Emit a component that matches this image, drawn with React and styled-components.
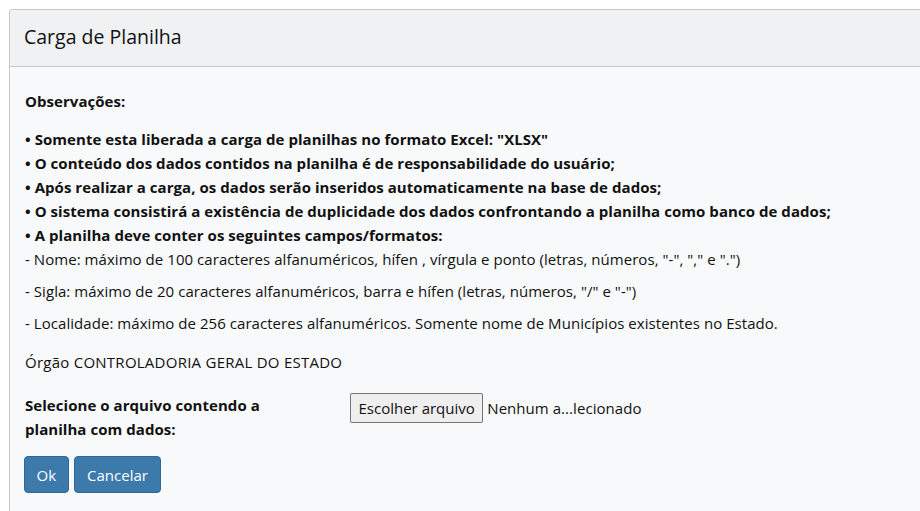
import React from 'react';
import styled, { createGlobalStyle } from 'styled-components';

const GlobalStyle = createGlobalStyle`
  html, body {
    margin: 0;
    padding: 0;
    background: #ffffff;
  }
  body {
    font-family: 'Open Sans', 'Noto Sans', sans-serif;
    font-size: 15px;
    letter-spacing: 0.05px;
    color: #111;
  }
`;

const Page = styled.div`
  padding: 9px 0 0 9px;
  width: 920px;
  height: 511px;
  box-sizing: border-box;
  overflow: hidden;
`;

const Panel = styled.div`
  border: 1px solid #c9c9c9;
  border-right: none;
  border-bottom: none;
  border-top-left-radius: 4px;
  background: #f8f9fa;
  min-height: 600px;
`;

const Header = styled.div`
  height: 56px;
  display: flex;
  align-items: center;
  padding: 0 15px 0 14px;
  background: #f0f1f3;
  border-bottom: 1px solid #c9c9c9;
  border-top-left-radius: 4px;
`;

const Title = styled.h3`
  margin: 0 0 4px;
  font-size: 19.5px;
  font-weight: 400;
  letter-spacing: 0;
  color: #111;
`;

const Body = styled.div`
  padding: 22px 15px 15px;
  line-height: 24px;
`;

const Block = styled.p`
  margin: 0 0 ${p => p.gap ?? 8}px;
  font-weight: ${p => (p.bold ? 700 : 400)};
  letter-spacing: ${p => p.spacing ?? 0.05}px;
`;

const Line = styled.span`
  display: block;
  font-weight: ${p => (p.bold ? 700 : 400)};
`;

const FileRow = styled.div`
  display: grid;
  grid-template-columns: 325px 1fr;
  align-items: start;
  margin-bottom: 15px;
`;

const FileLabel = styled.label`
  font-weight: 700;
  width: 260px;
`;

const FileField = styled.div`
  display: flex;
  align-items: center;
  gap: 4px;
`;

const FileButton = styled.button`
  height: 30px;
  padding: 0 7.5px;
  font-family: inherit;
  font-size: 15px;
  letter-spacing: 0;
  color: #111;
  background: #efefef;
  border: 1px solid #767676;
  border-radius: 2px;
`;

const FileName = styled.span`
  color: #111;
`;

const Actions = styled.div`
  display: flex;
  gap: 5px;
  margin-left: -1px;
`;

const Button = styled.button`
  height: 37px;
  padding: 0 ${p => (p.wide ? 12.5 : 11.5)}px;
  font-family: inherit;
  font-size: 15px;
  letter-spacing: 0;
  color: #fff;
  background: #3b7aab;
  border: 1px solid #2e6896;
  border-radius: 4px;
`;

const bullets = [
  '• Somente esta liberada a carga de planilhas no formato Excel: "XLSX"',
  '• O conteúdo dos dados contidos na planilha é de responsabilidade do usuário;',
  '• Após realizar a carga, os dados serão inseridos automaticamente na base de dados;',
  '• O sistema consistirá a existência de duplicidade dos dados confrontando a planilha como banco de dados;',
  '• A planilha deve conter os seguintes campos/formatos:',
];

export default function App() {
  return (
    <>
      <GlobalStyle />
      <Page>
        <Panel>
          <Header>
            <Title>Carga de Planilha</Title>
          </Header>
          <Body>
            <Block bold gap={14}>Observações:</Block>
            <Block>
              {bullets.map(b => (
                <Line bold key={b}>{b}</Line>
              ))}
              <Line>- Nome: máximo de 100 caracteres alfanuméricos, hífen , vírgula e ponto (letras, números, "-", "," e ".")</Line>
            </Block>
            <Block>- Sigla: máximo de 20 caracteres alfanuméricos, barra e hífen (letras, números, "/" e "-")</Block>
            <Block gap={15}>- Localidade: máximo de 256 caracteres alfanuméricos. Somente nome de Municípios existentes no Estado.</Block>
            <Block gap={19} spacing={0.25}>Órgão CONTROLADORIA GERAL DO ESTADO</Block>
            <FileRow>
              <FileLabel>Selecione o arquivo contendo a planilha com dados:</FileLabel>
              <FileField>
                <FileButton type="button">Escolher arquivo</FileButton>
                <FileName>Nenhum a...lecionado</FileName>
              </FileField>
            </FileRow>
            <Actions>
              <Button type="button">Ok</Button>
              <Button type="button" wide>Cancelar</Button>
            </Actions>
          </Body>
        </Panel>
      </Page>
    </>
  );
}
